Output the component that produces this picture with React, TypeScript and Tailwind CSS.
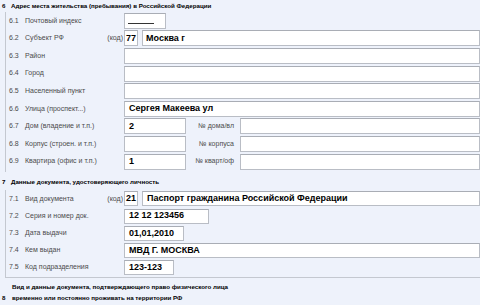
import React from 'react';

const font = { fontFamily: '"Liberation Sans", Arial, sans-serif' };

type Box = { w?: string; value?: string; h?: string; pad?: string };

function Field({ w = 'flex-1', value, h = 'h-[16px]', pad = 'pl-[4px]' }: Box) {
    return (
        <div className={`${w} ${h} ${pad} shrink-0 bg-white border border-[#b9bdc5] border-t-[#a9adb5] flex items-center text-[9px] font-bold text-black whitespace-nowrap overflow-hidden`}>
            {value}
        </div>
    );
}

function Label({ num, text }: { num: string; text: string }) {
    return (
        <div className="flex items-center text-[7px] text-[#4b4b4b] whitespace-nowrap">
            <span className="w-[16px]">{num}</span>
            <span>{text}</span>
        </div>
    );
}

function Row({ num, text, code, children, h = 'h-[17.6px]' }: { num: string; text: string; code?: boolean; children: React.ReactNode; h?: string }) {
    return (
        <div className={`${h} flex items-center`}>
            <div className="w-[115px] shrink-0 flex items-center justify-between pr-[1px]">
                <Label num={num} text={text} />
                {code && <span className="text-[7px] text-[#4b4b4b]">(код)</span>}
            </div>
            <div className="flex-1 flex items-center gap-[4px] min-w-0">{children}</div>
        </div>
    );
}

function Header({ num, text }: { num: string; text: string }) {
    return (
        <div className="flex items-center text-[6.2px] font-bold text-black whitespace-nowrap h-full">
            <span className="w-[11px] pl-[2px]">{num}</span>
            <span>{text}</span>
        </div>
    );
}

function Pair({ value, tag }: { value?: string; tag: string }) {
    return (
        <>
            <Field w="w-[62px]" value={value} />
            <span className="w-[46px] shrink-0 text-right text-[7px] text-[#4b4b4b] whitespace-nowrap pr-[2px]">{tag}</span>
            <Field />
        </>
    );
}

export default function App() {
    return (
        <div className="w-[480px] h-[305px] overflow-hidden bg-[#eef2fb]" style={font}>
            <div className="h-[12px]">
                <Header num="6" text="Адрес места жительства (пребывания) в Российской Федерации" />
            </div>
            <div className="ml-[5px] border-l border-[#c4c8d0] pl-[3px] pb-[2px]">
                <Row num="6.1" text="Почтовый индекс">
                    <div className="w-[42px] h-[16px] bg-white border border-[#b9bdc5] border-t-[#a9adb5] flex items-end pl-[3px] pb-[4px]">
                        <div className="w-[26px] border-b border-[#333]" />
                    </div>
                </Row>
                <Row num="6.2" text="Субъект РФ" code>
                    <Field w="w-[14px]" pad="pl-[1px]" value="77" />
                    <Field pad="pl-[3px]" value="Москва г" />
                </Row>
                <Row num="6.3" text="Район">
                    <Field />
                </Row>
                <Row num="6.4" text="Город">
                    <Field />
                </Row>
                <Row num="6.5" text="Населенный пункт">
                    <Field />
                </Row>
                <Row num="6.6" text="Улица (проспект...)">
                    <Field value="Сергея Макеева ул" />
                </Row>
                <Row num="6.7" text="Дом (владение и т.п.)">
                    <Pair value="2" tag="№ дома/вл" />
                </Row>
                <Row num="6.8" text="Корпус (строен. и т.п.)">
                    <Pair tag="№ корпуса" />
                </Row>
                <Row num="6.9" text="Квартира (офис и т.п.)">
                    <Pair value="1" tag="№ кварт/оф" />
                </Row>
            </div>
            <div className="h-[18px]">
                <Header num="7" text="Данные документа, удостоверяющего личность" />
            </div>
            <div className="ml-[5px] border-l border-b border-[#c4c8d0] pl-[3px] pb-[1px]">
                <Row num="7.1" text="Вид документа" code h="h-[17.2px]">
                    <Field w="w-[14px]" h="h-[15px]" pad="pl-[1px]" value="21" />
                    <Field h="h-[15px]" value="Паспорт гражданина Российской Федерации" />
                </Row>
                <Row num="7.2" text="Серия и номер док." h="h-[17.2px]">
                    <Field w="w-[85px]" h="h-[15px]" value="12 12 123456" />
                </Row>
                <Row num="7.3" text="Дата выдачи" h="h-[17.2px]">
                    <Field w="w-[60px]" h="h-[15px]" value="01,01,2010" />
                </Row>
                <Row num="7.4" text="Кем выдан" h="h-[17.2px]">
                    <Field h="h-[15px]" value="МВД Г. МОСКВА" />
                </Row>
                <Row num="7.5" text="Код подразделения" h="h-[17.2px]">
                    <Field w="w-[50px]" h="h-[15px]" value="123-123" />
                </Row>
            </div>
            <div className="flex items-end pt-[3px] text-[6.2px] font-bold text-black leading-[11px] whitespace-nowrap">
                <span className="w-[12px] pl-[2px] shrink-0">8</span>
                <div>
                    <div>Вид и данные документа, подтверждающего право физического лица</div>
                    <div>временно или постоянно проживать на территории РФ</div>
                </div>
            </div>
        </div>
    );
}
